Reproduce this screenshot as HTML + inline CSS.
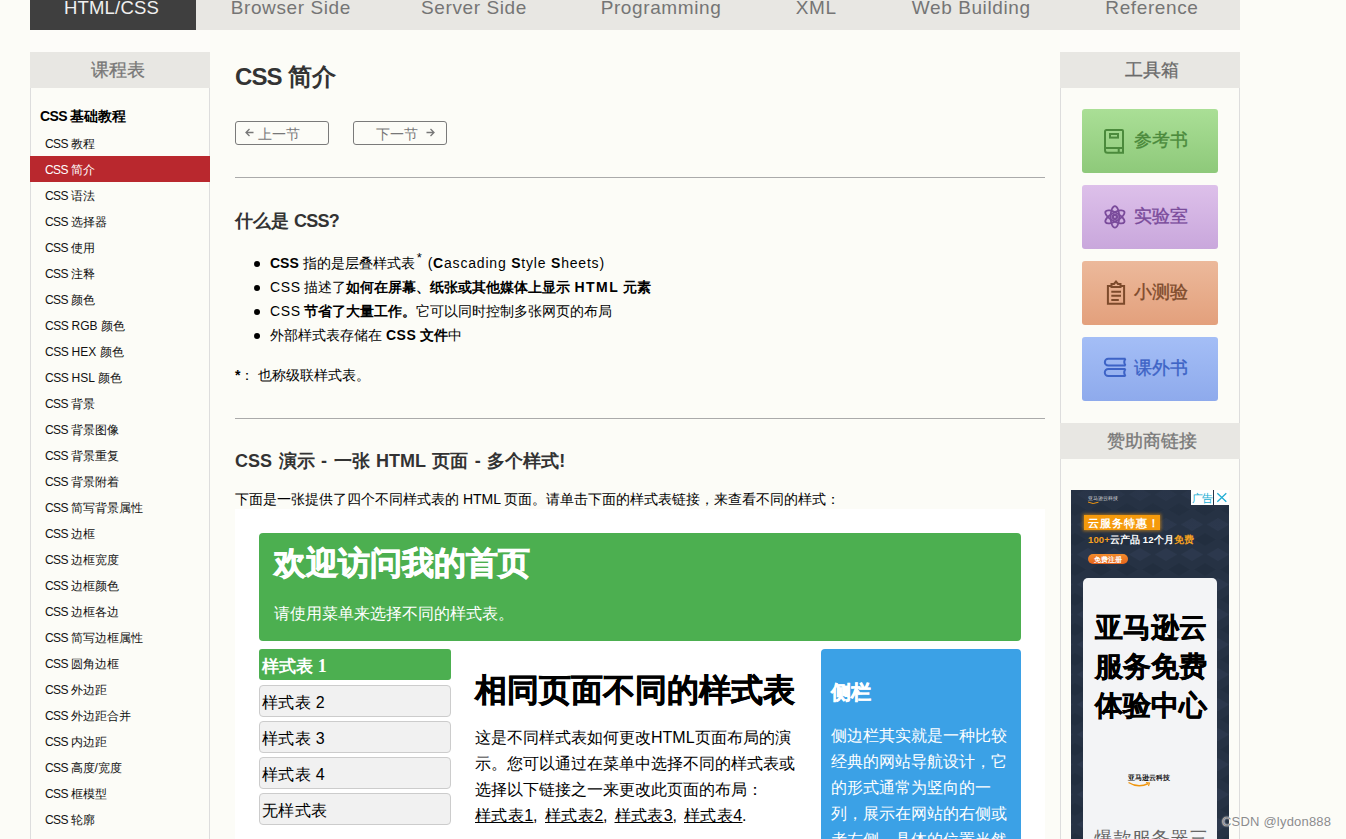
<!DOCTYPE html>
<html><head><meta charset="utf-8"><style>
html,body{margin:0;padding:0;}
body{width:1346px;height:839px;overflow:hidden;position:relative;background:#fcfcf7;font-family:"Liberation Sans", sans-serif;}
.t{position:absolute;white-space:nowrap;line-height:1;}
.r{position:absolute;}
b{font-weight:bold;}
</style></head><body>
<div class="r" style="left:30px;top:0px;width:1210px;height:30px;background:#e8e7e3;"></div>
<div class="r" style="left:30px;top:0px;width:166px;height:30px;background:#3f3f3f;"></div>
<div class="t" style="left:28.5px;width:166px;text-align:center;top:-1.36px;font-size:18.5px;color:#f0f0f0;font-weight:normal;letter-spacing:0.2px;">HTML/CSS</div>
<div class="t" style="left:190.8px;width:200px;text-align:center;top:-1.78px;font-size:19px;color:#757575;font-weight:normal;letter-spacing:0.6px;">Browser Side</div>
<div class="t" style="left:374.0px;width:200px;text-align:center;top:-1.78px;font-size:19px;color:#757575;font-weight:normal;letter-spacing:0.6px;">Server Side</div>
<div class="t" style="left:561.0px;width:200px;text-align:center;top:-1.78px;font-size:19px;color:#757575;font-weight:normal;letter-spacing:0.6px;">Programming</div>
<div class="t" style="left:716.2px;width:200px;text-align:center;top:-1.78px;font-size:19px;color:#757575;font-weight:normal;letter-spacing:0.6px;">XML</div>
<div class="t" style="left:871.2px;width:200px;text-align:center;top:-1.78px;font-size:19px;color:#757575;font-weight:normal;letter-spacing:0.6px;">Web Building</div>
<div class="t" style="left:1051.9px;width:200px;text-align:center;top:-1.78px;font-size:19px;color:#757575;font-weight:normal;letter-spacing:0.6px;">Reference</div>
<div class="r" style="left:30px;top:30px;width:180px;height:22px;background:#fdfcf9;"></div>
<div class="r" style="left:1060px;top:30px;width:180px;height:22px;background:#fdfcf9;"></div>
<div class="r" style="left:30px;top:52px;width:180px;height:787px;background:#fcfcf7;border-left:1px solid #ddd;border-right:1px solid #ddd;box-sizing:border-box;"></div>
<div class="r" style="left:30px;top:52px;width:180px;height:36px;background:#e8e7e3;"></div>
<div class="t" style="left:28.0px;width:180px;text-align:center;top:60.76px;font-size:18px;color:#777;font-weight:normal;-webkit-text-stroke:0.3px #777;">课程表</div>
<div class="t" style="left:40px;top:109.15px;font-size:14px;color:#000;font-weight:bold;"><span style="letter-spacing:-0.6px">CSS </span>基础教程</div>
<div class="t" style="left:45px;top:137.84px;font-size:12px;color:#111;font-weight:normal;"><span style="letter-spacing:-0.6px">CSS </span>教程</div>
<div class="r" style="left:30px;top:156px;width:180px;height:26px;background:#b9282e;"></div>
<div class="t" style="left:45px;top:163.84px;font-size:12px;color:#fff;font-weight:normal;"><span style="letter-spacing:-0.6px">CSS </span>简介</div>
<div class="t" style="left:45px;top:189.84px;font-size:12px;color:#111;font-weight:normal;"><span style="letter-spacing:-0.6px">CSS </span>语法</div>
<div class="t" style="left:45px;top:215.84px;font-size:12px;color:#111;font-weight:normal;"><span style="letter-spacing:-0.6px">CSS </span>选择器</div>
<div class="t" style="left:45px;top:241.84px;font-size:12px;color:#111;font-weight:normal;"><span style="letter-spacing:-0.6px">CSS </span>使用</div>
<div class="t" style="left:45px;top:267.84px;font-size:12px;color:#111;font-weight:normal;"><span style="letter-spacing:-0.6px">CSS </span>注释</div>
<div class="t" style="left:45px;top:293.84px;font-size:12px;color:#111;font-weight:normal;"><span style="letter-spacing:-0.6px">CSS </span>颜色</div>
<div class="t" style="left:45px;top:319.84px;font-size:12px;color:#111;font-weight:normal;"><span style="letter-spacing:-0.5px">CSS</span> RGB 颜色</div>
<div class="t" style="left:45px;top:345.84px;font-size:12px;color:#111;font-weight:normal;"><span style="letter-spacing:-0.5px">CSS</span> HEX 颜色</div>
<div class="t" style="left:45px;top:371.84px;font-size:12px;color:#111;font-weight:normal;"><span style="letter-spacing:-0.5px">CSS</span> HSL 颜色</div>
<div class="t" style="left:45px;top:397.84px;font-size:12px;color:#111;font-weight:normal;"><span style="letter-spacing:-0.6px">CSS </span>背景</div>
<div class="t" style="left:45px;top:423.84px;font-size:12px;color:#111;font-weight:normal;"><span style="letter-spacing:-0.6px">CSS </span>背景图像</div>
<div class="t" style="left:45px;top:449.84px;font-size:12px;color:#111;font-weight:normal;"><span style="letter-spacing:-0.6px">CSS </span>背景重复</div>
<div class="t" style="left:45px;top:475.84px;font-size:12px;color:#111;font-weight:normal;"><span style="letter-spacing:-0.6px">CSS </span>背景附着</div>
<div class="t" style="left:45px;top:501.84px;font-size:12px;color:#111;font-weight:normal;"><span style="letter-spacing:-0.6px">CSS </span>简写背景属性</div>
<div class="t" style="left:45px;top:527.84px;font-size:12px;color:#111;font-weight:normal;"><span style="letter-spacing:-0.6px">CSS </span>边框</div>
<div class="t" style="left:45px;top:553.84px;font-size:12px;color:#111;font-weight:normal;"><span style="letter-spacing:-0.6px">CSS </span>边框宽度</div>
<div class="t" style="left:45px;top:579.84px;font-size:12px;color:#111;font-weight:normal;"><span style="letter-spacing:-0.6px">CSS </span>边框颜色</div>
<div class="t" style="left:45px;top:605.84px;font-size:12px;color:#111;font-weight:normal;"><span style="letter-spacing:-0.6px">CSS </span>边框各边</div>
<div class="t" style="left:45px;top:631.84px;font-size:12px;color:#111;font-weight:normal;"><span style="letter-spacing:-0.6px">CSS </span>简写边框属性</div>
<div class="t" style="left:45px;top:657.84px;font-size:12px;color:#111;font-weight:normal;"><span style="letter-spacing:-0.6px">CSS </span>圆角边框</div>
<div class="t" style="left:45px;top:683.84px;font-size:12px;color:#111;font-weight:normal;"><span style="letter-spacing:-0.6px">CSS </span>外边距</div>
<div class="t" style="left:45px;top:709.84px;font-size:12px;color:#111;font-weight:normal;"><span style="letter-spacing:-0.6px">CSS </span>外边距合并</div>
<div class="t" style="left:45px;top:735.84px;font-size:12px;color:#111;font-weight:normal;"><span style="letter-spacing:-0.6px">CSS </span>内边距</div>
<div class="t" style="left:45px;top:761.84px;font-size:12px;color:#111;font-weight:normal;"><span style="letter-spacing:-0.6px">CSS </span>高度/宽度</div>
<div class="t" style="left:45px;top:787.84px;font-size:12px;color:#111;font-weight:normal;"><span style="letter-spacing:-0.6px">CSS </span>框模型</div>
<div class="t" style="left:45px;top:813.84px;font-size:12px;color:#111;font-weight:normal;"><span style="letter-spacing:-0.6px">CSS </span>轮廓</div>
<div class="t" style="left:235px;top:64.68px;font-size:24px;color:#333;font-weight:bold;"><span style="letter-spacing:-0.9px">CSS</span> 简介</div>
<div class="r" style="left:235px;top:121px;width:94px;height:24px;background:transparent;border:1px solid #7a7a7a;border-radius:3px;box-sizing:border-box;"></div>
<div class="r" style="left:353px;top:121px;width:94px;height:24px;background:transparent;border:1px solid #7a7a7a;border-radius:3px;box-sizing:border-box;"></div>
<div class="t" style="left:258px;top:126.65px;font-size:14px;color:#777;font-weight:normal;">上一节</div>
<svg class="r" style="left:245px;top:128px" width="9" height="9" viewBox="0 0 9 9"><path d="M4.5 1 L1 4.5 L4.5 8 M1 4.5 H8.5" stroke="#777" stroke-width="1.3" fill="none"/></svg><div class="t" style="left:375.5px;top:126.65px;font-size:14px;color:#777;font-weight:normal;">下一节</div>
<svg class="r" style="left:426px;top:128px" width="9" height="9" viewBox="0 0 9 9"><path d="M4.5 1 L8 4.5 L4.5 8 M8 4.5 H0.5" stroke="#777" stroke-width="1.3" fill="none"/></svg><div class="r" style="left:235px;top:177px;width:810px;height:1px;background:#aaa;"></div>
<div class="t" style="left:235px;top:211.76px;font-size:18px;color:#333;font-weight:bold;">什么是 <span style="letter-spacing:-0.8px">CSS?</span></div>
<div class="r" style="left:254px;top:261px;width:6px;height:6px;background:#000;border-radius:50%;"></div>
<div class="r" style="left:254px;top:285px;width:6px;height:6px;background:#000;border-radius:50%;"></div>
<div class="r" style="left:254px;top:309px;width:6px;height:6px;background:#000;border-radius:50%;"></div>
<div class="r" style="left:254px;top:333px;width:6px;height:6px;background:#000;border-radius:50%;"></div>
<div class="t" style="left:270px;top:255.65px;font-size:14px;color:#000;font-weight:normal;"><b>CSS</b> 指的是层叠样式表<span style="font-size:13px;position:relative;top:-6px;margin-left:2px">*</span> <span style="letter-spacing:0.8px;margin-left:2px">(<b>C</b>ascading <b>S</b>tyle <b>S</b>heets)</span></div>
<div class="t" style="left:270px;top:279.65px;font-size:14px;color:#000;font-weight:normal;"><span style="letter-spacing:0.6px">CSS</span> 描述了<b>如何在屏幕、纸张或其他媒体上显示 <span style="letter-spacing:1.5px">HTML</span> 元素</b></div>
<div class="t" style="left:270px;top:303.65px;font-size:14px;color:#000;font-weight:normal;"><span style="letter-spacing:0.6px">CSS</span> <b>节省了大量工作。</b>它可以同时控制多张网页的布局</div>
<div class="t" style="left:270px;top:327.65px;font-size:14px;color:#000;font-weight:normal;">外部样式表存储在 <b><span style="letter-spacing:0.6px">CSS</span> 文件</b>中</div>
<div class="t" style="left:235px;top:368.15px;font-size:14px;color:#000;font-weight:normal;"><b>*</b>：<span style="margin-left:4px">也称级联样式表。</span></div>
<div class="r" style="left:235px;top:418px;width:810px;height:1px;background:#aaa;"></div>
<div class="t" style="left:235px;top:452.26px;font-size:18px;color:#333;font-weight:bold;word-spacing:1.5px;">CSS 演示 - 一张 HTML 页面 - 多个样式!</div>
<div class="t" style="left:235px;top:492.15px;font-size:14px;color:#000;font-weight:normal;">下面是一张提供了四个不同样式表的 HTML 页面。请单击下面的样式表链接，来查看不同的样式：</div>
<div class="r" style="left:235px;top:509px;width:810px;height:330px;background:#fff;"></div>
<div class="r" style="left:259px;top:533px;width:762px;height:108px;background:#4caf50;border-radius:4px;"></div>
<div class="t" style="left:274px;top:546.71px;font-size:32px;color:#fff;font-weight:bold;-webkit-text-stroke:0.8px #fff;">欢迎访问我的首页</div>
<div class="t" style="left:274px;top:606.46px;font-size:16px;color:#fff;font-weight:normal;">请使用菜单来选择不同的样式表。</div>
<div class="r" style="left:259px;top:649px;width:192px;height:31px;background:#4caf50;border-radius:3px;"></div>
<div class="t" style="left:262px;top:657.11px;font-size:17px;color:#fff;font-weight:bold;">样式表 <span style="font-family:Liberation Serif;font-size:18px">1</span></div>
<div class="r" style="left:259px;top:685px;width:192px;height:32px;background:#f1f1f1;border:1px solid #ccc;border-radius:4px;box-sizing:border-box;"></div>
<div class="t" style="left:262px;top:694.96px;font-size:16px;color:#000;font-weight:normal;letter-spacing:0.3px;">样式表 2</div>
<div class="r" style="left:259px;top:721px;width:192px;height:32px;background:#f1f1f1;border:1px solid #ccc;border-radius:4px;box-sizing:border-box;"></div>
<div class="t" style="left:262px;top:730.96px;font-size:16px;color:#000;font-weight:normal;letter-spacing:0.3px;">样式表 3</div>
<div class="r" style="left:259px;top:757px;width:192px;height:32px;background:#f1f1f1;border:1px solid #ccc;border-radius:4px;box-sizing:border-box;"></div>
<div class="t" style="left:262px;top:766.96px;font-size:16px;color:#000;font-weight:normal;letter-spacing:0.3px;">样式表 4</div>
<div class="r" style="left:259px;top:793px;width:192px;height:32px;background:#f1f1f1;border:1px solid #ccc;border-radius:4px;box-sizing:border-box;"></div>
<div class="t" style="left:262px;top:802.96px;font-size:16px;color:#000;font-weight:normal;letter-spacing:0.3px;">无样式表</div>
<div class="t" style="left:475px;top:673.91px;font-size:32px;color:#000;font-weight:bold;-webkit-text-stroke:0.5px #000;">相同页面不同的样式表</div>
<div class="t" style="left:475px;top:729.96px;font-size:16px;color:#000;font-weight:normal;">这是不同样式表如何更改HTML页面布局的演</div>
<div class="t" style="left:475px;top:755.96px;font-size:16px;color:#000;font-weight:normal;">示。您可以通过在菜单中选择不同的样式表或</div>
<div class="t" style="left:475px;top:781.96px;font-size:16px;color:#000;font-weight:normal;">选择以下链接之一来更改此页面的布局：</div>
<div class="t" style="left:475px;top:807.96px;font-size:16px;color:#000;font-weight:normal;letter-spacing:0.4px"><u style="text-underline-offset:1px">样式表1</u></div>
<div class="t" style="left:545px;top:807.96px;font-size:16px;color:#000;font-weight:normal;letter-spacing:0.4px"><u style="text-underline-offset:1px">样式表2</u></div>
<div class="t" style="left:614.5px;top:807.96px;font-size:16px;color:#000;font-weight:normal;letter-spacing:0.4px"><u style="text-underline-offset:1px">样式表3</u></div>
<div class="t" style="left:684px;top:807.96px;font-size:16px;color:#000;font-weight:normal;letter-spacing:0.4px"><u style="text-underline-offset:1px">样式表4</u></div>
<div class="t" style="left:533px;top:807.96px;font-size:16px;color:#000;font-weight:normal;">,</div>
<div class="t" style="left:603px;top:807.96px;font-size:16px;color:#000;font-weight:normal;">,</div>
<div class="t" style="left:672.5px;top:807.96px;font-size:16px;color:#000;font-weight:normal;">,</div>
<div class="t" style="left:742px;top:807.96px;font-size:16px;color:#000;font-weight:normal;">.</div>
<div class="r" style="left:821px;top:649px;width:200px;height:251px;background:#3ba1e6;border-radius:4px;"></div>
<div class="t" style="left:831px;top:682.07px;font-size:20px;color:#fff;font-weight:bold;-webkit-text-stroke:0.4px #fff;">侧栏</div>
<div class="t" style="left:831px;top:728.46px;font-size:16px;color:#fff;font-weight:normal;">侧边栏其实就是一种比较</div>
<div class="t" style="left:831px;top:754.46px;font-size:16px;color:#fff;font-weight:normal;">经典的网站导航设计，它</div>
<div class="t" style="left:831px;top:780.46px;font-size:16px;color:#fff;font-weight:normal;">的形式通常为竖向的一</div>
<div class="t" style="left:831px;top:806.46px;font-size:16px;color:#fff;font-weight:normal;">列，展示在网站的右侧或</div>
<div class="t" style="left:831px;top:832.46px;font-size:16px;color:#fff;font-weight:normal;">者左侧，具体的位置当然</div>
<div class="r" style="left:1060px;top:52px;width:180px;height:787px;background:#fcfcf7;border-left:1px solid #ddd;border-right:1px solid #ddd;box-sizing:border-box;"></div>
<div class="r" style="left:1060px;top:52px;width:180px;height:36px;background:#e8e7e3;"></div>
<div class="t" style="left:1061.5px;width:180px;text-align:center;top:60.76px;font-size:18px;color:#6a6a6a;font-weight:normal;-webkit-text-stroke:0.3px #6a6a6a;">工具箱</div>
<div class="r" style="left:1082px;top:109px;width:136px;height:64px;background:linear-gradient(#aadf96,#8ec97a);border-radius:3px;"></div>
<div class="t" style="left:1134px;top:131.26px;font-size:18px;color:#4b8a3c;font-weight:normal;-webkit-text-stroke:0.35px #4b8a3c;">参考书</div>
<div class="r" style="left:1082px;top:185px;width:136px;height:64px;background:linear-gradient(#ddc0ea,#c9a7dc);border-radius:3px;"></div>
<div class="t" style="left:1134px;top:207.26px;font-size:18px;color:#7a4b9b;font-weight:normal;-webkit-text-stroke:0.35px #7a4b9b;">实验室</div>
<div class="r" style="left:1082px;top:261px;width:136px;height:64px;background:linear-gradient(#ecb99b,#e3a07c);border-radius:3px;"></div>
<div class="t" style="left:1134px;top:283.26px;font-size:18px;color:#7d4a2b;font-weight:normal;-webkit-text-stroke:0.35px #7d4a2b;">小测验</div>
<div class="r" style="left:1082px;top:337px;width:136px;height:64px;background:linear-gradient(#a4bef6,#8eaaec);border-radius:3px;"></div>
<div class="t" style="left:1134px;top:359.26px;font-size:18px;color:#3d63c6;font-weight:normal;-webkit-text-stroke:0.35px #3d63c6;">课外书</div>
<svg class="r" style="left:1103px;top:128px" width="22" height="26" viewBox="0 0 22 26"><g fill="none" stroke="#4b8a3c" stroke-width="2"><path d="M3.5 2 H19 A1 1 0 0 1 20 3 V24.7 H4.5 A2.5 2.5 0 0 1 2 22.2 V3.5 A1.5 1.5 0 0 1 3.5 2 Z"/><rect x="7" y="6" width="8" height="3.6"/><path d="M2 20 H20 M15.7 20 V24.7"/></g></svg><svg class="r" style="left:1103px;top:205px" width="24" height="24" viewBox="0 0 24 24"><g fill="none" stroke="#7a4b9b" stroke-width="1.8" transform="translate(11.9 11.9)"><ellipse rx="4.3" ry="10.8"/><ellipse rx="4.3" ry="10.8" transform="rotate(60)"/><ellipse rx="4.3" ry="10.8" transform="rotate(-60)"/><circle r="2.1" stroke-width="2.4"/></g></svg><svg class="r" style="left:1105px;top:279px" width="22" height="28" viewBox="0 0 22 28"><g fill="none" stroke="#7d4a2b" stroke-width="2"><path d="M6.5 7 H2.9 V24.7 H19.1 V7 H15.5"/><path d="M6.5 8 V5 H9 L11 2.6 L13 5 H15.5 V8 Z"/><path d="M6.3 12.7 H16 M6.3 16.8 H16 M6.3 20.9 H13.8"/></g></svg><svg class="r" style="left:1102px;top:356px" width="26" height="23" viewBox="0 0 26 23"><g fill="none" stroke="#3d63c6" stroke-width="2"><path d="M23.5 2.7 H6.3 A3.45 3.45 0 0 0 6.3 9.6 H23.5"/><path d="M23.5 2.7 Q21 6.15 23.5 9.6"/><path d="M23.5 13 H6.3 A3.5 3.5 0 0 0 6.3 20 H23.5"/><path d="M23.5 13 Q21 16.5 23.5 20"/></g></svg><div class="r" style="left:1060px;top:423px;width:180px;height:36px;background:#e8e7e3;"></div>
<div class="t" style="left:1062.0px;width:180px;text-align:center;top:431.76px;font-size:18px;color:#777;font-weight:normal;-webkit-text-stroke:0.3px #777;">赞助商链接</div>
<div class="r" style="left:1071px;top:490px;width:158px;height:349px;background:#263244;"></div>
<svg class="r" style="left:1071px;top:490px" width="158" height="349" viewBox="0 0 158 349"><defs><pattern id="cube" width="26" height="30" patternUnits="userSpaceOnUse" x="4" y="-4"><path d="M13 2 L24 8.5 L13 15 L2 8.5 Z" fill="#34415a" opacity="0.4"/><path d="M0 17 L11 23.5 L0 30 Z M26 17 L15 23.5 L26 30 Z" fill="#1e2939" opacity="0.5"/></pattern><linearGradient id="fade" x1="0" y1="0" x2="0" y2="1"><stop offset="0" stop-color="#263244" stop-opacity="0.5"/><stop offset="1" stop-color="#263244" stop-opacity="0"/></linearGradient></defs><rect width="158" height="349" fill="url(#cube)"/><rect width="158" height="40" fill="url(#fade)"/></svg><div class="r" style="left:1083px;top:578px;width:134px;height:261px;background:#f3f4f6;border-radius:5px 5px 0 0;"></div>
<div class="t" style="left:1084.0px;width:134px;text-align:center;top:614.30px;font-size:28px;color:#000;font-weight:bold;-webkit-text-stroke:0.4px #000;">亚马逊云</div>
<div class="t" style="left:1084.0px;width:134px;text-align:center;top:653.30px;font-size:28px;color:#000;font-weight:bold;-webkit-text-stroke:0.4px #000;">服务免费</div>
<div class="t" style="left:1084.0px;width:134px;text-align:center;top:692.30px;font-size:28px;color:#000;font-weight:bold;-webkit-text-stroke:0.4px #000;">体验中心</div>
<div class="t" style="left:1094px;top:830.34px;font-size:18.5px;color:#666;font-weight:normal;">爆款服务器三</div>
<div class="r" style="left:1084px;top:515px;width:76px;height:15px;background:#f59a0c;box-shadow:0 0 3px 1px rgba(245,154,12,0.6);"></div>
<div class="t" style="left:1088px;top:517.99px;font-size:11px;color:#fff;font-weight:bold;letter-spacing:1.1px;">云服务特惠！</div>
<div class="t" style="left:1088px;top:535.26px;font-size:9.5px;color:#fff;font-weight:bold;letter-spacing:0.1px;"><span style="color:#f5a020">100+</span>云产品 12个月<span style="color:#f5a020">免费</span></div>
<div class="r" style="left:1088px;top:554px;width:40px;height:10px;background:linear-gradient(#f28c2c,#e5641c);border-radius:5px;"></div>
<div class="t" style="left:1088.0px;width:40px;text-align:center;top:556.37px;font-size:7px;color:#fff;font-weight:normal;font-weight:bold;">免费注册</div>
<div class="t" style="left:1128px;top:773.82px;font-size:7.3px;color:#222;font-weight:bold;">亚马逊云科技</div>
<svg class="r" style="left:1127px;top:780px" width="26" height="9" viewBox="0 0 26 9"><path d="M1.5 2.5 Q11 8.5 21.5 3.5" stroke="#f0960e" stroke-width="1.4" fill="none"/><path d="M19 2.5 L22.5 3 L21.5 6" stroke="#f0960e" stroke-width="1.1" fill="none"/></svg><div class="t" style="left:1088px;top:497.19px;font-size:4.5px;color:#ddd;font-weight:normal;">亚马逊云科技</div>
<svg class="r" style="left:1087px;top:500.5px" width="16" height="5" viewBox="0 0 16 5"><path d="M1 1 Q6 4 11.5 1.2" stroke="#f0960e" stroke-width="1" fill="none"/></svg><div class="r" style="left:1191px;top:490px;width:22px;height:15px;background:#fff;"></div>
<div class="r" style="left:1214px;top:490px;width:15px;height:15px;background:#fff;"></div>
<div class="t" style="left:1191.5px;top:492.69px;font-size:11px;color:#22aed4;font-weight:normal;letter-spacing:-0.5px;">广告</div>
<svg class="r" style="left:1216px;top:492px" width="12" height="11" viewBox="0 0 12 11"><path d="M1.3 1.3 L10.3 9.8 M10.3 1.3 L1.3 9.8" stroke="#22aed4" stroke-width="1.3" fill="none"/></svg><div class="t" style="left:1222px;top:815.00px;font-size:13px;color:#8c8c8c;font-weight:normal;letter-spacing:0.2px;text-shadow:0 0 1px #fff,0 0 2px #fff;">CSDN @lydon888</div>

</body></html>
